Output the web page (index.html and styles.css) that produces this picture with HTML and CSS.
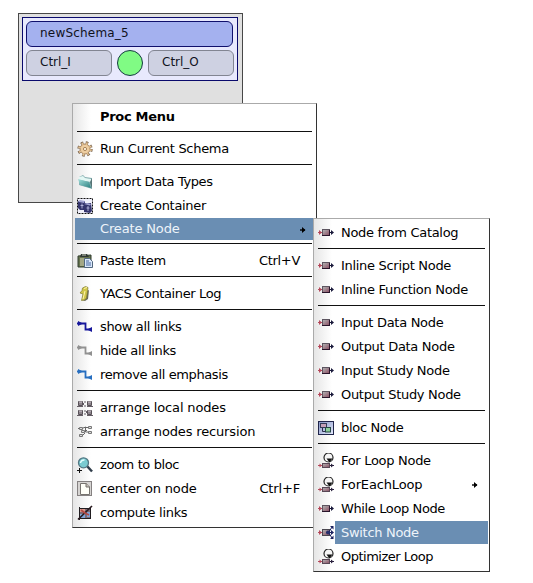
FILE: index.html
```html
<!DOCTYPE html>
<html lang="en">
<head>
<meta charset="utf-8">
<title>Schema editor</title>
<link rel="stylesheet" href="styles.css">
</head>
<body>
<svg class="defs" width="0" height="0">
  <defs>
    <linearGradient id="g-node" x1="0" y1="0" x2="1" y2="1"><stop offset="0" stop-color="#b3bab8"/><stop offset="1" stop-color="#8a4a60"/></linearGradient>
    <linearGradient id="g-teal" x1="0" y1="0" x2="1" y2="1"><stop offset="0" stop-color="#a5e0dc"/><stop offset="1" stop-color="#2b8080"/></linearGradient>
    <linearGradient id="g-bloc" x1="0" y1="0" x2="1" y2="1"><stop offset="0" stop-color="#8493c4"/><stop offset="1" stop-color="#e8edff"/></linearGradient>
    <symbol id="node" viewBox="0 0 16 16">
      <path d="M0 7.500h4" stroke="#b5495b"/><path d="M1 5l3 2.500L1 10z" fill="#b5495b"/>
      <rect x="4.500" y="4.500" width="7" height="6" fill="url(#g-node)" stroke="#5d5560"/>
      <path d="M4 10.500h8M11.500 5v6" stroke="#29152a"/><path d="M12 7.500h3" stroke="#18183a"/><path d="M13 5l3 2.500L13 10z" fill="#18183a"/>
    </symbol>
    <symbol id="loop" viewBox="0 0 16 16">
      <circle cx="10.500" cy="4.500" r="4.500" stroke="#222" stroke-width="1.200" fill="#f6f6f6"/>
      <path d="M8.500 5.500h6L11.500 9.500z" fill="#111"/>
      <path d="M0 12.500h4" stroke="#b5495b"/><path d="M1.500 10.500l2.500 2-2.500 2z" fill="#b5495b"/>
      <rect x="4.500" y="10.500" width="7" height="4" fill="url(#g-node)" stroke="#594856"/>
      <path d="M12 12.500h4" stroke="#29203d"/><path d="M13 10.500l2.500 2-2.500 2z" fill="#29203d"/>
    </symbol>
    <symbol id="switch" viewBox="0 0 16 16">
      <path d="M0 7.500h4" stroke="#b5495b"/><path d="M1 5l3 2.500L1 10z" fill="#b5495b"/>
      <rect x="4.500" y="4.500" width="7" height="6" fill="url(#g-node)" stroke="#4b4750"/>
      <path d="M8 7.500h6M11 7l3-5M11 8l3 5" stroke="#1c2260"/>
      <path d="M12 1h3.500v3.500zM12 14h3.500v-3.500zM13 5l3 2.500L13 10z" fill="#1c2260"/><circle cx="10" cy="7.500" r="2" fill="#28306c"/>
    </symbol>
    <symbol id="bloc" viewBox="0 0 16 16">
      <rect x=".5" y="1.500" width="15" height="13" fill="url(#g-bloc)" stroke="#20254b"/>
      <rect x="2.500" y="3.500" width="6" height="4" fill="#c4a0b8" stroke="#353b57"/>
      <path d="M4.500 8v3.500H7" stroke="#292c4b" fill="none"/>
      <rect x="7.500" y="7.500" width="5" height="4.500" fill="#8cd09a" stroke="#264844"/>
    </symbol>
    <symbol id="gear" viewBox="0 0 16 16">
      <circle cx="8" cy="8" r="6" fill="none" stroke="#7d6751" stroke-width="3.400" stroke-dasharray="2.400 2.312"/>
      <circle cx="8" cy="8" r="5" fill="#edcda0" stroke="#a5815c"/>
      <circle cx="8" cy="8" r="5.600" fill="none" stroke="#e3c08f" stroke-width="2.600" stroke-dasharray="1.400 2.998" stroke-dashoffset="-.5"/>
      <circle cx="8" cy="8" r="1.600" fill="#fff6e2" stroke="#a9845a"/>
    </symbol>
    <symbol id="import" viewBox="0 0 16 16">
      <path d="M2 3l4-2 2 2 7 1v11l-3-1-10-3z" fill="#85aeb0"/>
      <path d="M2 3l4-1 2 2 6 1v3L2 6z" fill="#e3f7f4"/>
      <path d="M1 5l11 3 2 6-11-3z" fill="url(#g-teal)"/><path d="M13 8l2-4v11z" fill="#567476"/>
    </symbol>
    <symbol id="container" viewBox="0 0 16 16">
      <rect x=".5" y=".5" width="15" height="15" fill="#f0f0fb" stroke="#111" stroke-dasharray="2 1"/>
      <path d="M1 3h7v2l6 0 1 8-2 2-6-1v-2l-4 0-2-2z" fill="#34346d"/>
      <path d="M1 3l2-1 5 1-1 2-5-1zM7 6l3-1 4 1-1 1.500z" fill="#a4a5d3"/>
      <path d="M5 5.500v5M3.500 7.500h3M11 8v5M9.500 10h3" stroke="#c4c4ea" stroke-width=".8"/>
    </symbol>
    <symbol id="paste" viewBox="0 0 16 16">
      <path d="M1 3l13-1v12L1 14z" fill="#65724d" stroke="#303d2f"/>
      <path d="M4 1h6l2 3H3z" fill="#303834"/><path d="M5 2h4" stroke="#c5ccb9"/>
      <path d="M3 5h5v8H3z" fill="#a3a785"/><path d="M7.500 5.500h5l3 3v6h-8z" fill="#d9e7fa" stroke="#52677e"/>
      <path d="M9 10h5M9 12h5M9 8h3" stroke="#46679f"/>
    </symbol>
    <symbol id="info" viewBox="0 0 16 16">
      <path d="M5 14l3 1 3-2 1-9-2 1z" fill="#676858"/>
      <path d="M5.500 2l3-1.500L11 1.500 9.500 12l-2 2-3 .5L6 8 3 7l2-2.500z" fill="#cfc648" stroke="#807b31" stroke-width=".7"/>
      <path d="M7 2.500l3-1M8 5l-2 8" stroke="#fff5ad"/>
    </symbol>
    <symbol id="link" viewBox="0 0 16 16">
      <path d="M0 4.500h8.500v6H15" fill="none" stroke="currentColor" stroke-width="1.800"/>
      <path d="M1 2l5 2.500L1 7zM15 8v5l-5-2.500z" fill="currentColor"/>
    </symbol>
    <symbol id="grid" viewBox="0 0 16 16">
      <g fill="#8d858c" stroke="#575057"><path d="M1.500 1.500h4v4h-4zM10.500 1.500h4v4h-4zM1.500 10.500h4v4h-4zM10.500 10.500h4v4h-4z"/></g>
      <path d="M2 2h3M11 2h3M2 11h3M11 11h3" stroke="#d4c9d1"/>
      <path d="M0 6.500h6M10 6.500h6M0 15.500h6M10 15.500h6M8 1v2M8 5v2M8 10v2M8 13v2M6.500 3v2M9.500 11v2" stroke="#655d65"/>
    </symbol>
    <symbol id="tree" viewBox="0 0 16 16">
      <g fill="#ddd" stroke="#777"><path d="M2.500 3.500h3v2h-3zM11.500 2.500h3v2h-3zM4.500 6.500h3v2h-3zM11.500 7.500h3v2h-3zM2.500 10.500h3v2h-3z"/></g>
      <path d="M1 4.500h1M6 4l3-1M8 8l2-2M8 3.500h3M8.500 4v4h3M6 11l2-2" stroke="#666" fill="none"/>
    </symbol>
    <symbol id="zoom" viewBox="0 0 16 16">
      <path d="M10 9l5 5.500" stroke="#303d4a" stroke-width="2.500"/><circle cx="6.500" cy="5.800" r="5" fill="#7acbd1" stroke="#537783" stroke-width="1.300"/>
      <path d="M3.500 6a3.500 3.500 0 0 1 4-3" stroke="#e5ffff" stroke-width="1.500" fill="none"/><path d="M0 13.500h5M2.500 11v5" stroke="#111"/>
    </symbol>
    <symbol id="page" viewBox="0 0 16 16">
      <rect x=".5" y=".5" width="14" height="14" fill="#d6d4d2" stroke="#858181"/>
      <path d="M3.500 2.500h6l3 3.500v7.500h-9z" fill="#fffff8" stroke="#77736f"/><path d="M9 2v4h4" fill="#c1bbb3" stroke="#77736f"/>
    </symbol>
    <symbol id="compute" viewBox="0 0 16 16">
      <rect x="2" y="3" width="12" height="11" fill="#7d6b77"/><path d="M3 9h5v4H3zM10 7h3v5h-3z" fill="#7fa3d8"/><path d="M3 4h5v3H3z" fill="#d99a8d"/>
      <path d="M2.500 2v13M1 13.500h13M13.500 3v11M3 3.500h11" stroke="#201d20"/><path d="M1 14.500L15 1" stroke="#291b20" stroke-width="1.600"/>
      <path d="M4 5l4 3 4 2" stroke="#b54a45" stroke-width="1.800" fill="none"/>
    </symbol>
    <symbol id="arrow" viewBox="0 0 6 6"><path d="M0 3h5" stroke="#000" stroke-width="1.400"/><path d="M2 0L5.500 3 2 6z"/></symbol>
  </defs>
</svg>

<main class="canvas">
  <section class="schema">
    <div class="schema-head">
      <div class="pill schema-name">newSchema_5</div>
      <div class="ports">
        <div class="pill port">Ctrl_I</div>
        <div class="status"></div>
        <div class="pill port">Ctrl_O</div>
      </div>
    </div>
  </section>

  <nav class="menu proc-menu">
    <div class="title">Proc Menu</div>
    <hr>
    <div class="item"><svg class="icon"><use href="#gear"/></svg><span>Run Current Schema</span></div>
    <hr>
    <div class="item tight"><svg class="icon"><use href="#import"/></svg><span>Import Data Types</span></div>
    <div class="item"><svg class="icon"><use href="#container"/></svg><span>Create Container</span></div>
    <div class="item open loose"><i class="icon"></i><span>Create Node</span><svg class="arrow"><use href="#arrow"/></svg></div>
    <hr>
    <div class="item"><svg class="icon"><use href="#paste"/></svg><span>Paste Item</span><kbd>Ctrl+V</kbd></div>
    <hr>
    <div class="item tight"><svg class="icon"><use href="#info"/></svg><span>YACS Container Log</span></div>
    <hr>
    <div class="item tight"><svg class="icon show"><use href="#link"/></svg><span>show all links</span></div>
    <div class="item tight"><svg class="icon hide"><use href="#link"/></svg><span>hide all links</span></div>
    <div class="item tight"><svg class="icon plain"><use href="#link"/></svg><span>remove all emphasis</span></div>
    <hr>
    <div class="item loose"><svg class="icon"><use href="#grid"/></svg><span>arrange local nodes</span></div>
    <div class="item loose"><svg class="icon"><use href="#tree"/></svg><span>arrange nodes recursion</span></div>
    <hr>
    <div class="item tight"><svg class="icon"><use href="#zoom"/></svg><span>zoom to bloc</span></div>
    <div class="item loose"><svg class="icon"><use href="#page"/></svg><span>center on node</span><kbd>Ctrl+F</kbd></div>
    <div class="item"><svg class="icon"><use href="#compute"/></svg><span>compute links</span></div>
  </nav>

  <nav class="menu node-menu">
    <div class="item"><svg class="icon"><use href="#node"/></svg><span>Node from Catalog</span></div>
    <hr>
    <div class="item"><svg class="icon"><use href="#node"/></svg><span>Inline Script Node</span></div>
    <div class="item"><svg class="icon"><use href="#node"/></svg><span>Inline Function Node</span></div>
    <hr>
    <div class="item"><svg class="icon"><use href="#node"/></svg><span>Input Data Node</span></div>
    <div class="item"><svg class="icon"><use href="#node"/></svg><span>Output Data Node</span></div>
    <div class="item"><svg class="icon"><use href="#node"/></svg><span>Input Study Node</span></div>
    <div class="item"><svg class="icon"><use href="#node"/></svg><span>Output Study Node</span></div>
    <hr>
    <div class="item"><svg class="icon"><use href="#bloc"/></svg><span>bloc Node</span></div>
    <hr>
    <div class="item"><svg class="icon"><use href="#loop"/></svg><span>For Loop Node</span></div>
    <div class="item loose"><svg class="icon"><use href="#loop"/></svg><span>ForEachLoop</span><svg class="arrow"><use href="#arrow"/></svg></div>
    <div class="item tight"><svg class="icon"><use href="#node"/></svg><span>While Loop Node</span></div>
    <div class="item hover"><svg class="icon"><use href="#switch"/></svg><span>Switch Node</span></div>
    <div class="item tighter"><svg class="icon"><use href="#loop"/></svg><span>Optimizer Loop</span></div>
  </nav>
</main>
</body>
</html>
```
FILE: styles.css
```css
* { box-sizing: border-box; }

body {
  margin: 0;
  background: #fff;
  color: #000;
  font: 13px/24px "DejaVu Sans", sans-serif;
  letter-spacing: -0.3px;
}

.defs { position: absolute; }

.canvas {
  position: relative;
  height: 583px;
  overflow: hidden;
}

.schema {
  position: absolute;
  left: 18px;
  top: 13px;
  width: 225px;
  height: 190px;
  padding: 3px;
  border: 1px solid #484848;
  background: #e0e0e0;
}

.schema-head {
  display: flex;
  flex-direction: column;
  gap: 3px;
  width: 216px;
  height: 64px;
  padding: 3px;
  border: 1px solid #0a0a6c;
  background: #e8e9fd;
}

.pill {
  height: 26px;
  padding-left: 13px;
  border: 1px solid #828592;
  border-radius: 6px;
  background: #ced1e2;
  color: #10121c;
  font-size: 12px;
  letter-spacing: 0;
  line-height: 22px;
}

.schema-name {
  width: 207px;
  border-color: #10106c;
  background: #a4b1ef;
  letter-spacing: 0.2px;
}

.ports {
  display: flex;
  justify-content: space-between;
  width: 208px;
}

.port { width: 86px; }

.status {
  width: 26px;
  height: 26px;
  border: 1px solid #153a42;
  border-radius: 50%;
  background: #80fb84;
}

.menu {
  position: absolute;
  border: 1px solid #333;
  border-top-color: #aaa;
  border-left-color: #aaa;
  background: linear-gradient(to right, #e6e6e6, #fff 18px);
}

.proc-menu {
  left: 72px;
  top: 103px;
  width: 245px;
  height: 425px;
}

.node-menu {
  left: 313px;
  top: 218px;
  width: 177px;
  height: 354px;
  padding-top: 1px;
}

.menu hr {
  height: 1px;
  margin: 4px;
  border: 0;
  background: #111;
}

.title {
  height: 23px;
  padding: 1px 0 0 27px;
  font-weight: bold;
}

.item {
  display: flex;
  align-items: center;
  height: 24px;
  padding: 0 16px 0 4px;
  white-space: nowrap;
}

.item span,
.item kbd { padding-top: 2px; }

.node-menu .item { padding-right: 11px; }

.icon {
  flex: none;
  width: 16px;
  height: 16px;
  margin: 2px 7px 0 0;
}

.item kbd {
  margin-left: auto;
  font: inherit;
}

.arrow {
  width: 6px;
  height: 6px;
  margin: 1px 0 0 auto;
}

.open {
  height: 22px;
  margin: 1px 3px -1px 2px;
  padding: 0 7px 0 2px;
  background: #6a8eb3;
  color: #eef4fa;
}

.open span { padding-top: 0; }

.hover {
  margin-right: 1px;
  background: linear-gradient(#6a8eb3, #6a8eb3) 21px 1px no-repeat;
  color: #eef4fa;
}

.loose { letter-spacing: -0.15px; }
.tight { letter-spacing: -0.38px; }
.tighter { letter-spacing: -0.5px; }

.show { color: #17179b; }
.hide { color: #919191; }
.plain { color: #286fc0; }
```
